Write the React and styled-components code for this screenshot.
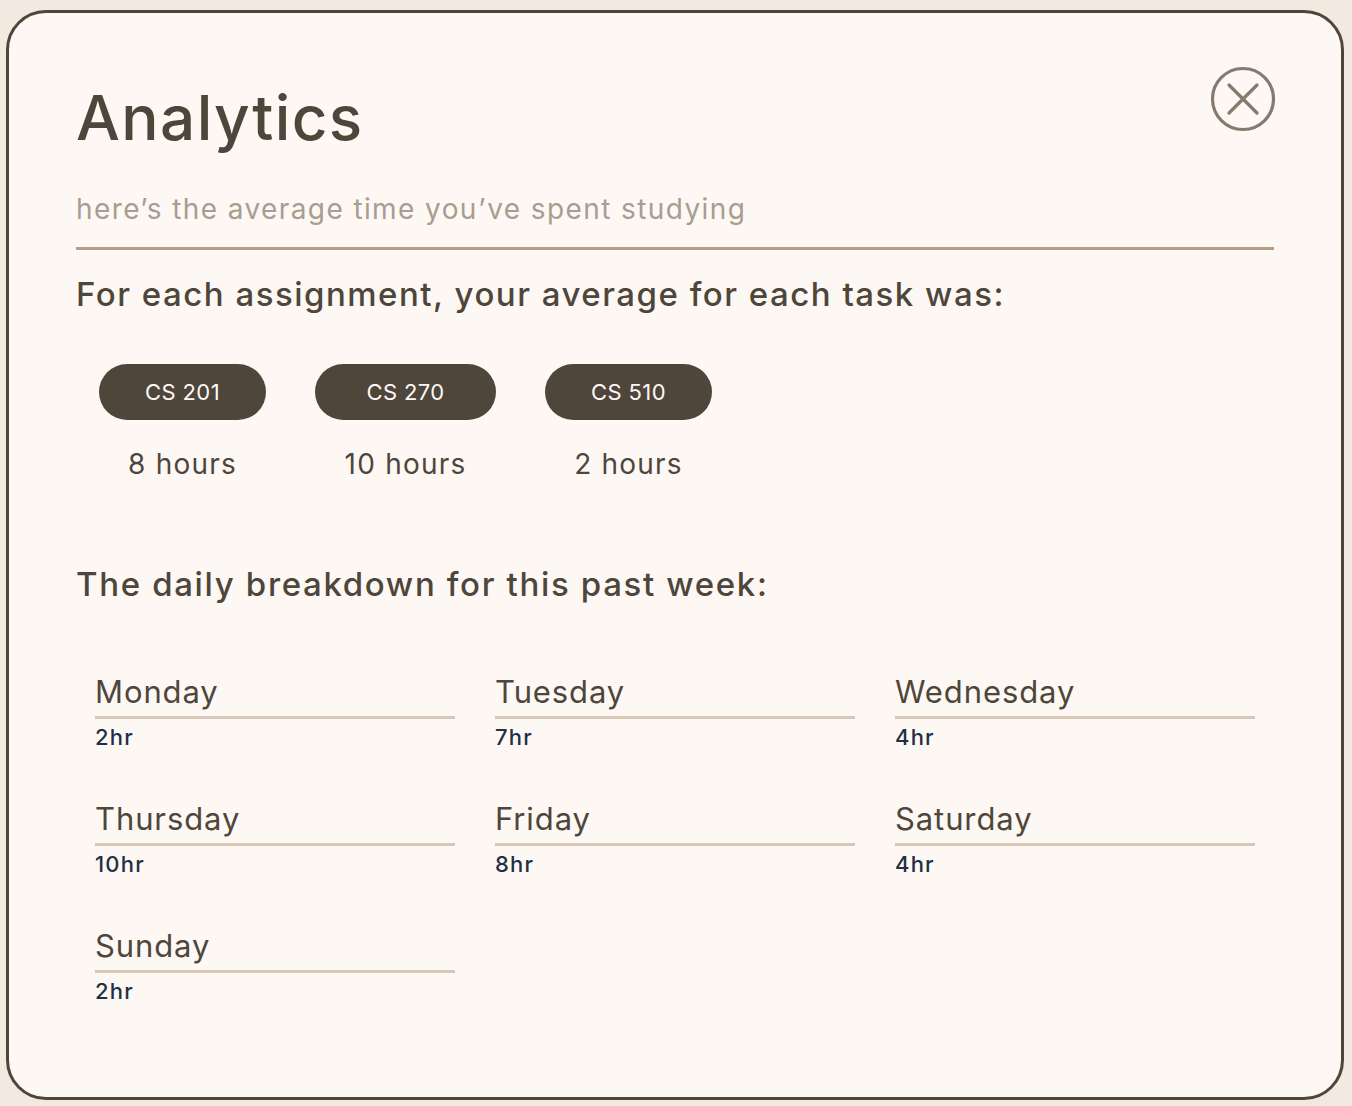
import React from 'react'
import styled, { createGlobalStyle } from 'styled-components'

const Global = createGlobalStyle`
  html, body {
    margin: 0;
    padding: 0;
    background-color: #f2e9e1;
    font-family: 'Inter', 'DejaVu Sans', sans-serif;
  }
`

const Modal = styled.div`
  box-sizing: border-box;
  width: 1338px;
  height: 1090px;
  margin: 10px 0 0 6px;
  border: 3px solid #504539;
  border-radius: 40px;
  background-color: #fdf8f4;
  padding: 67px 67px 0 67px;
  position: relative;
  color: #4f463b;
`

const CloseButton = styled.button`
  position: absolute;
  top: 52px;
  right: 64px;
  width: 68px;
  height: 68px;
  padding: 0;
  border: none;
  background: none;
  cursor: pointer;
`

const Title = styled.h1`
  margin: 0;
  font-size: 62px;
  font-weight: 500;
  line-height: 76px;
  letter-spacing: 1.4px;
`

const Subtitle = styled.div`
  margin-top: 35px;
  font-size: 28px;
  line-height: 36px;
  letter-spacing: 1.4px;
  color: #a89d90;
  padding-bottom: 20px;
  border-bottom: 3px solid #b59e88;
`

const SectionTitle = styled.h2`
  margin: ${p => p.top}px 0 0 0;
  font-size: 33px;
  font-weight: 500;
  line-height: 40px;
  letter-spacing: ${p => p.spacing}px;
`

const Courses = styled.div`
  display: flex;
  gap: 49px;
  margin: 50px 0 0 23px;
`

const Course = styled.div`
  display: flex;
  flex-direction: column;
  align-items: center;
`

const Pill = styled.div`
  width: ${p => p.w}px;
  height: 56px;
  border-radius: 28px;
  background-color: #4f463b;
  color: #fdf8f4;
  font-size: 22px;
  letter-spacing: 0.4px;
  display: flex;
  align-items: center;
  justify-content: center;
`

const Hours = styled.div`
  margin-top: 26px;
  font-size: 28px;
  line-height: 36px;
  letter-spacing: 1.2px;
`

const Days = styled.div`
  display: grid;
  grid-template-columns: repeat(3, 360px);
  column-gap: 40px;
  row-gap: 50px;
  margin: 70px 0 0 19px;
`

const Day = styled.div`
  display: flex;
  flex-direction: column;
`

const DayName = styled.div`
  font-size: 31px;
  line-height: 36px;
  letter-spacing: 0.9px;
  padding-bottom: 6px;
  border-bottom: 3px solid #d9c7b8;
`

const DayHours = styled.div`
  margin-top: 4px;
  font-size: 22px;
  font-weight: 500;
  line-height: 28px;
  letter-spacing: 1.2px;
  color: #1f3045;
`

const courses = [
  { name: 'CS 201', hours: '8 hours', w: 167 },
  { name: 'CS 270', hours: '10 hours', w: 181 },
  { name: 'CS 510', hours: '2 hours', w: 167 },
]

const days = [
  ['Monday', '2hr'],
  ['Tuesday', '7hr'],
  ['Wednesday', '4hr'],
  ['Thursday', '10hr'],
  ['Friday', '8hr'],
  ['Saturday', '4hr'],
  ['Sunday', '2hr'],
]

const App = () => {
  return (
    <>
      <Global />
      <Modal>
        <CloseButton aria-label="close">
          <svg width="68" height="68" viewBox="0 0 68 68" fill="none" stroke="#857a6d" strokeWidth="3.2" strokeLinecap="round">
            <circle cx="34" cy="34" r="30.5" />
            <path d="M20 20 L48 48 M48 20 L20 48" />
          </svg>
        </CloseButton>
        <Title>Analytics</Title>
        <Subtitle>here’s the average time you’ve spent studying</Subtitle>
        <SectionTitle top={24} spacing={1.5}>For each assignment, your average for each task was:</SectionTitle>
        <Courses>
          {courses.map(c => (
            <Course key={c.name}>
              <Pill w={c.w}>{c.name}</Pill>
              <Hours>{c.hours}</Hours>
            </Course>
          ))}
        </Courses>
        <SectionTitle top={82} spacing={1.65}>The daily breakdown for this past week:</SectionTitle>
        <Days>
          {days.map(([name, hrs]) => (
            <Day key={name}>
              <DayName>{name}</DayName>
              <DayHours>{hrs}</DayHours>
            </Day>
          ))}
        </Days>
      </Modal>
    </>
  )
}

export default App
